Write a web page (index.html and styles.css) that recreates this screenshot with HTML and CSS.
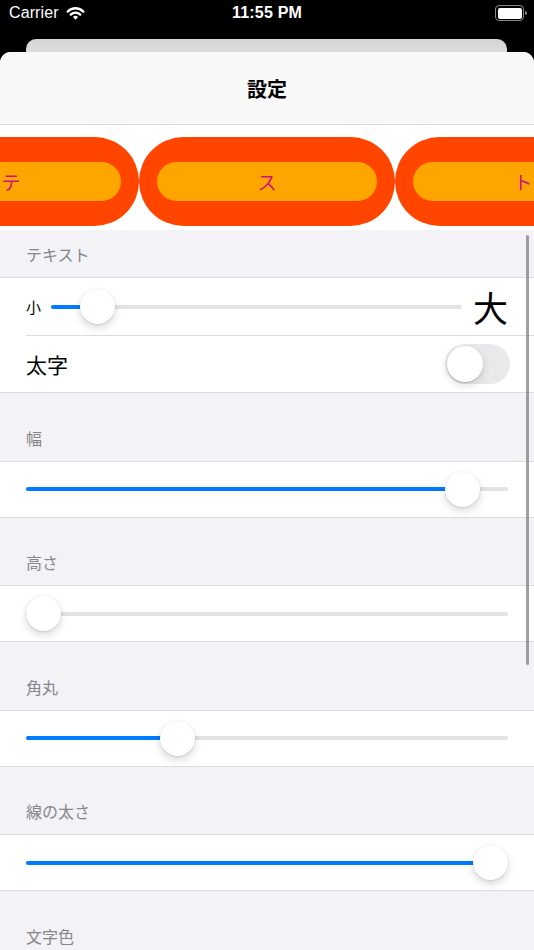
FILE: index.html
```html
<!DOCTYPE html>
<html lang="ja">
<head>
<meta charset="utf-8">
<title>設定</title>
<link rel="stylesheet" href="styles.css">
</head>
<body>
<div class="screen">
  <div class="status">
    <div class="status-left">
      <span class="carrier">Carrier</span>
      <svg class="wifi" viewBox="0 0 18 13" width="19" height="14">
        <path d="M1.6 5.1 A10.5 10.5 0 0 1 16.4 5.1" fill="none" stroke="#fff" stroke-width="2.3" stroke-linecap="round"/>
        <path d="M4.5 8.0 A6.4 6.4 0 0 1 13.5 8.0" fill="none" stroke="#fff" stroke-width="2.3" stroke-linecap="round"/>
        <path d="M9 12.9 L6.6 10.4 A3.4 3.4 0 0 1 11.4 10.4 Z" fill="#fff"/>
      </svg>
    </div>
    <div class="time">11:55 PM</div>
    <div class="battery"><span class="batt-body"><span class="batt-fill"></span></span><span class="batt-nub"></span></div>
  </div>
  <div class="back-card"></div>
  <div class="sheet">
    <div class="nav"><h1 class="nav-title">設定</h1></div>
    <div class="banner">
      <div class="pill-outer"><div class="pill-inner">テ</div></div>
      <div class="pill-outer"><div class="pill-inner">ス</div></div>
      <div class="pill-outer"><div class="pill-inner">ト</div></div>
    </div>
    <div class="list">
      <div class="header first">テキスト</div>
      <div class="group">
        <div class="row tall">
          <span class="small-a">小</span>
          <div class="slider" style="--v:0.077">
            <div class="track"><div class="fill"></div></div>
            <div class="thumb"></div>
          </div>
          <span class="big-a">大</span>
        </div>
        <div class="row tall sep toggle-row">
          <span class="label">太字</span>
          <div class="toggle"><div class="knob"></div></div>
        </div>
      </div>

      <div class="header">幅</div>
      <div class="group">
        <div class="row">
          <div class="slider" style="--v:0.9375">
            <div class="track"><div class="fill"></div></div>
            <div class="thumb"></div>
          </div>
        </div>
      </div>

      <div class="header">高さ</div>
      <div class="group">
        <div class="row">
          <div class="slider" style="--v:0">
            <div class="track"><div class="fill"></div></div>
            <div class="thumb"></div>
          </div>
        </div>
      </div>

      <div class="header">角丸</div>
      <div class="group">
        <div class="row">
          <div class="slider" style="--v:0.3">
            <div class="track"><div class="fill"></div></div>
            <div class="thumb"></div>
          </div>
        </div>
      </div>

      <div class="header">線の太さ</div>
      <div class="group">
        <div class="row">
          <div class="slider" style="--v:1">
            <div class="track"><div class="fill"></div></div>
            <div class="thumb"></div>
          </div>
        </div>
      </div>

      <div class="header">文字色</div>
    </div>
    <div class="scroll-indicator"></div>
  </div>
</div>
</body>
</html>
```
FILE: styles.css
```css
html, body {
  margin: 0;
  padding: 0;
  background: #000;
}
body {
  width: 534px;
  height: 950px;
  overflow: hidden;
  font-family: "Noto Sans CJK JP", "Noto Sans", sans-serif;
}
.screen {
  width: 534px;
  height: 950px;
  display: flex;
  flex-direction: column;
  background: #000;
}
.status {
  height: 26px;
  display: grid;
  grid-template-columns: 1fr auto 1fr;
  align-items: center;
  color: #fff;
  font-family: "Liberation Sans", Arial, sans-serif;
}
.status-left {
  display: flex;
  align-items: center;
  gap: 7px;
  padding-left: 9px;
}
.carrier {
  font-size: 16px;
  letter-spacing: 0.1px;
}
.wifi {
  display: block;
  margin-top: -1px;
}
.time {
  font-size: 16px;
  font-weight: bold;
  letter-spacing: 0.2px;
}
.battery {
  justify-self: end;
  display: flex;
  align-items: center;
  padding-right: 7px;
}
.batt-body {
  width: 24px;
  height: 11px;
  border: 1.2px solid #8a8a8a;
  border-radius: 4px;
  padding: 1.5px;
  box-sizing: content-box;
  display: flex;
}
.batt-fill {
  flex: 1;
  background: #fff;
  border-radius: 2px;
}
.batt-nub {
  width: 2px;
  height: 4px;
  background: #8a8a8a;
  border-radius: 0 2px 2px 0;
  margin-left: 1px;
}
.back-card {
  margin: 13px 27px 0 26px;
  height: 13px;
  background: linear-gradient(#d6d6d6, #dcdcdc);
  border-radius: 10px 10px 0 0;
}
.sheet {
  flex: 1;
  position: relative;
  overflow: hidden;
  background: #f2f2f7;
  border-radius: 11px 11px 0 0;
}
.nav {
  height: 72px;
  background: #f8f8f8;
  border-bottom: 1px solid #dcdcdc;
  display: flex;
  align-items: center;
  justify-content: center;
}
.nav-title {
  margin: 0;
  font-size: 20px;
  font-weight: bold;
  color: #000;
  line-height: 1;
  padding-top: 2px;
}
.banner {
  height: 105px;
  background: #fff;
  display: flex;
  justify-content: center;
  align-items: flex-start;
  padding-top: 12px;
  box-sizing: border-box;
  overflow: hidden;
}
.pill-outer {
  flex: 0 0 256px;
  height: 89px;
  box-sizing: border-box;
  padding: 25px 18px;
  background: #ff4500;
  border-radius: 45px;
}
.pill-inner {
  height: 39px;
  border-radius: 20px;
  background: #ffa500;
  color: #c71585;
  font-size: 19px;
  display: flex;
  align-items: center;
  justify-content: center;
}
.list {
  display: flex;
  flex-direction: column;
}
.header {
  height: 67.5px;
  box-sizing: border-box;
  padding: 0 26px 13px;
  display: flex;
  align-items: flex-end;
  font-size: 16px;
  line-height: 20px;
  color: #86868b;
  flex-shrink: 0;
}
.header.first {
  height: 47px;
}
.group {
  background: #fff;
  border-top: 1px solid #dcdce0;
  border-bottom: 1px solid #dcdce0;
  flex-shrink: 0;
}
.row {
  height: 55px;
  display: flex;
  align-items: center;
  padding: 0 26px;
  gap: 11px;
}
.row.tall {
  height: 57px;
}
.row.sep {
  height: 56px;
  margin-left: 26px;
  padding-left: 0;
  border-top: 1px solid #dcdce0;
}
.toggle-row {
  justify-content: space-between;
  padding-right: 24px;
}
.label {
  font-size: 21px;
  color: #000;
}
.small-a {
  font-size: 15px;
  color: #000;
  margin-right: -1px;
}
.big-a {
  font-size: 35px;
  line-height: 1;
  color: #000;
}
.slider {
  flex: 1;
  position: relative;
  height: 35px;
  display: flex;
  align-items: center;
}
.track {
  flex: 1;
  height: 4px;
  border-radius: 2px;
  background: #e3e3e6;
  display: flex;
}
.fill {
  width: calc(var(--v) * (100% - 35px) + 17.5px);
  background: #007aff;
  border-radius: 2px;
}
.thumb {
  position: absolute;
  top: 0;
  left: calc(var(--v) * (100% - 35px));
  width: 35px;
  height: 35px;
  border-radius: 50%;
  background: #fff;
  box-shadow: 0 4px 9px rgba(0, 0, 0, 0.15), 0 1px 2px rgba(0, 0, 0, 0.08), 0 0 0 0.5px rgba(0, 0, 0, 0.04);
}
.toggle {
  width: 65px;
  height: 40px;
  border-radius: 20px;
  background: #e9e9eb;
  display: flex;
  align-items: center;
  padding: 0 2px;
  box-sizing: border-box;
}
.knob {
  width: 36px;
  height: 36px;
  border-radius: 50%;
  background: #fff;
  box-shadow: 0 3px 8px rgba(0, 0, 0, 0.15), 0 1px 1px rgba(0, 0, 0, 0.16);
}
.scroll-indicator {
  position: absolute;
  right: 5px;
  top: 183px;
  width: 3.5px;
  height: 430px;
  border-radius: 2px;
  background: rgba(120, 120, 124, 0.7);
}
```
